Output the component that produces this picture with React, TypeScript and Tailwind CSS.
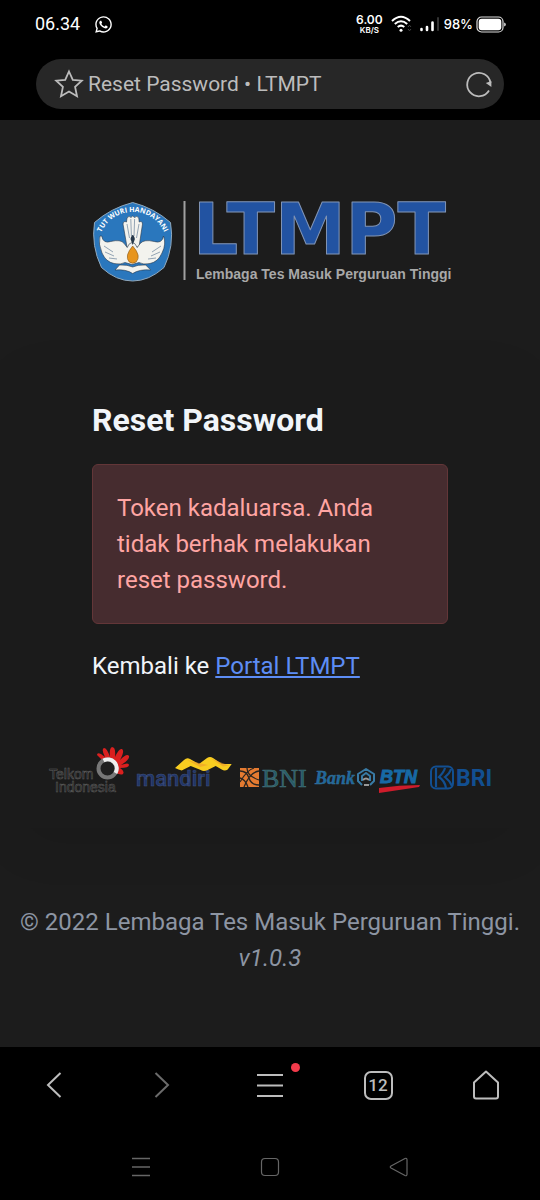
import { FaWhatsapp } from "react-icons/fa";

function StatusBar() {
  return (
    <div className="flex h-12 items-center justify-between pl-[35px] pr-[34px] text-white">
      <div className="flex items-center gap-3.5">
        <span className="text-lg leading-6">06.34</span>
        <FaWhatsapp size={19} aria-label="WhatsApp" />
      </div>
      <div className="flex items-center">
        <div className="flex flex-col items-center font-[Inter] font-semibold">
          <span className="text-[12px] leading-3">6.00</span>
          <span className="text-[8px] leading-2">KB/S</span>
        </div>
        <svg className="ml-2" width="22" height="18" viewBox="0 0 22 18" fill="none" stroke="#fff" strokeWidth="2" aria-hidden="true">
          <path d="M1 6Q10 -2.500 19 6M3.800 9Q10 3.500 16.200 9M6.700 12Q10 9.200 13.300 12" />
          <circle cx="10" cy="15.200" r="1.500" fill="#fff" stroke="none" />
          <path d="M17 12l1.500-1.800 1.500 1.800M17 14l1.500 1.800 1.500-1.800" stroke="#444" strokeWidth="1" />
        </svg>
        <svg className="ml-1.5" width="21" height="18" viewBox="0 0 21 18" strokeWidth="2.600" strokeLinecap="round" aria-hidden="true">
          <path d="M2.500 14v1M8 12v3M13.500 7.500v7.500" stroke="#fff" />
          <path d="M19 3v12" stroke="#333" strokeWidth="2" />
        </svg>
        <span className="ml-1 font-[Inter] text-[13px] font-medium leading-5">98%</span>
        <svg className="ml-[3px]" width="30" height="17" viewBox="0 0 30 17" aria-hidden="true">
          <rect x="1" y="1" width="26" height="15" rx="4.500" fill="none" stroke="#ddd" strokeWidth="1.200" />
          <rect x="2.700" y="2.700" width="22.600" height="11.600" rx="3" fill="#fff" />
          <path d="M28 6.500q2 .3 2 2t-2 2z" fill="#bbb" />
        </svg>
      </div>
    </div>
  );
}

function AddressBar() {
  return (
    <div className="px-9 py-[11px]">
      <div className="flex h-[50px] items-center rounded-full bg-[#272727] pl-[18px] pr-[11px] text-[#bcbcbc]">
        <button type="button" aria-label="Bookmark" className="shrink-0">
          <svg width="30" height="30" viewBox="0 0 30 30" fill="none" stroke="currentColor" strokeWidth="1.800">
            <path d="M15 2.500l3.800 8.300 9 .9-6.700 6.200 1.900 9.300L15 22.500l-8 4.700 1.900-9.300-6.700-6.200 9-.9z" />
          </svg>
        </button>
        <span className="ml-1 flex-1 text-[21px] leading-7">Reset Password • LTMPT</span>
        <button type="button" aria-label="Reload" className="shrink-0">
          <svg width="28" height="28" viewBox="0 0 28 28" fill="none" stroke="currentColor" strokeWidth="1.800">
            <path d="M24 20.500A11.700 11.700 0 1 1 25.500 13" />
            <path d="M20.800 13l5.600 4V11z" fill="currentColor" stroke="none" />
          </svg>
        </button>
      </div>
    </div>
  );
}

function LtmptLogo() {
  return (
    <svg className="w-full overflow-visible" viewBox="0 0 356 88" role="img" aria-label="LTMPT - Lembaga Tes Masuk Perguruan Tinggi">
      <defs>
        <path id="motto" d="M8 35.500A34.500 34.500 0 0 1 73.500 35.500" />
      </defs>
      <path d="M40.700 2.500Q62 8 78.500 22.500Q82.500 46 72 67.500Q57 81 40.700 81Q24 81 9.500 67.500Q-1 46 2.500 22.500Q19 8 40.700 2.500z" fill="#2a77bd" stroke="#90a9be" strokeWidth="1" />
      <text fill="#fff" fontSize="7" fontWeight="700" fontFamily="Open Sans, sans-serif">
        <textPath href="#motto" startOffset="50%" textAnchor="middle">TUT WURI HANDAYANI</textPath>
      </text>
      <g fill="#f3f3ee" stroke="#26384a" strokeWidth=".6" strokeLinejoin="round">
        <path d="M35 47L31 24q.5-3.500 3.500-2l.5-4q2-3 4-.5 1.700-3 3.500 0 2.500-2.500 4.300.5l.4 4q3-1.500 3.300 2L47 47z" />
        <path d="M9.700 36q1.500 8 9 5.500 10-2.500 13.500 2l3 4q2-5 5-5t5 5l3-4q4-4.500 14-2 8 2.500 9.300-5.500 3 8-1.500 17-4 9-12 10.500-7 1.500-11-1l-7 2-7-2q-4 2.500-11 1-8-1.500-12-10.500-4-9-2-17z" />
        <path d="M23 70l4.500-5q8-.5 13.200 2 5-2.500 13-2l5 5q-11-1-18 3.500Q34 69 23 70z" />
      </g>
      <path d="M35 24l2.500 14M38.800 19l.6 17M42.600 19l-.6 17M47 24l-2.500 14M12 46l9 6M13 52l9 4M17 58l8 1M69 46l-9 6M68 52l-9 4M64 58l-8 1" fill="none" stroke="#68819a" strokeWidth=".7" />
      <path d="M40.700 46q9 10 3.500 16-3.500 2.500-7 0Q32 56 40.700 46z" fill="#e7951e" stroke="#744813" strokeWidth=".5" />
      <path d="M38.500 39q2.200-8 4.400 0l-2.200 6z" fill="#26384a" />
      <path d="M92.500 1v79" stroke="#a0a0a0" strokeWidth="2" />
      <text x="101" y="54" fill="#2253a2" stroke="#8094b5" strokeWidth="1" strokeLinejoin="round" fontFamily="DejaVu Sans, sans-serif" fontWeight="700" fontSize="71">LTMPT</text>
      <text x="104" y="79" fill="#a8a8a8" fontFamily="Liberation Sans, sans-serif" fontWeight="700" fontSize="14">Lembaga Tes Masuk Perguruan Tinggi</text>
    </svg>
  );
}

function Sponsors() {
  return (
    <svg className="w-full" viewBox="0 0 444 60" role="img" aria-label="Telkom Indonesia, mandiri, BNI, Bank BTN, BRI">
      <g fontFamily="Liberation Sans, sans-serif" fontSize="14" fill="#1b1b1b" stroke="#606060" strokeWidth=".5">
        <text x="1" y="39">Telkom</text>
        <text x="7" y="52">Indonesia</text>
      </g>
      <path d="M57 25Q53 18 49 15q0-3 4-1l4 3Q53 9 56 8q3 0 6 9-1-9 2-10 4 0 3 10 4-9 7-8 3 2-2 11 7-7 9-4 1 3-8 9 8-3 8 0 0 3-9 3 5 3 3 6-3 2-9-3z" fill="#da201f" />
      <circle cx="59.500" cy="28.500" r="9" fill="#202020" stroke="#777" strokeWidth="4" />
      <path d="M55.500 20.500A9 9 0 0 1 67.500 33" fill="none" stroke="#eee" strokeWidth="4" />
      <text x="88" y="46" fontFamily="Roboto, sans-serif" fontWeight="500" fontSize="22" fill="#203568" stroke="#41527e" strokeWidth=".5">mandiri</text>
      <path d="M127 28l9-8q3-3 6-1l9 5 8-6q3-2 6 0l9 6 9.700 0-4 5.500q-3 2-6 0l-6-3.500-8 4q-4 2-7 0l-10-4-9 4.500q-3-1-6.700-2.500z" fill="#f8cd20" />
      <path d="M139 20l13 7 8-2-9-2zM163 18.500l12 8 6-1-8-3z" fill="#ec9b2d" opacity=".6" />
      <rect x="192" y="28" width="19" height="19" fill="#e57b31" />
      <path d="M192 31q7 0 9 7t10 7M199 28q0 8 12 12M192 38q5 1 8 9M211 31q-9 1-15 16M206 28q-7 2-14 14" fill="none" stroke="#292521" strokeWidth="1.300" />
      <text x="214" y="47" fontFamily="Liberation Serif, serif" fontSize="26" fill="#255b66" stroke="#456f77" strokeWidth=".6">BNI</text>
      <text x="267" y="44" fontFamily="Liberation Serif, serif" fontStyle="italic" fontWeight="700" fontSize="18" fill="#1d679e" stroke="#3a7194" strokeWidth=".4">Bank</text>
      <g fill="none" stroke="#397ba5" strokeWidth="2" strokeLinejoin="round">
        <path d="M314 45l-4-4V34l8-5 8 5v7l-4 4M314 41v-5l4-3 4 3v5" />
        <path d="M315 40q3-3 6 0M316 45h5" stroke="#999" />
      </g>
      <text x="332" y="43" fontFamily="Liberation Sans, sans-serif" fontStyle="italic" fontWeight="700" fontSize="18" fill="#1769a5" stroke="#1769a5" strokeWidth="1">BTN</text>
      <path d="M331 48q20-3 41-3l-1 2q-20 3-40 6z" fill="#cf1c2b" />
      <rect x="383" y="26.500" width="22" height="22" rx="5" fill="none" stroke="#124f91" strokeWidth="2" />
      <path d="M388 28v19M397 28q-1 4-6 9 6 4 7 11M403 29q-1 4-6 8 5 4 7 9" fill="none" stroke="#124f91" strokeWidth="2.200" />
      <text x="408" y="46" fontFamily="Roboto, sans-serif" fontWeight="700" fontSize="23" fill="#124f91">BRI</text>
    </svg>
  );
}

function BrowserNav() {
  const button = "relative flex items-center justify-center";
  return (
    <nav aria-label="Browser" className="grid h-[76px] grid-cols-5 text-[#bdbdbd]">
      <button type="button" aria-label="Back" className={button}>
        <svg width="32" height="32" viewBox="0 0 32 32" fill="none" stroke="currentColor" strokeWidth="2"><path d="M22.500 4L10 16l12.500 12" /></svg>
      </button>
      <button type="button" aria-label="Forward" className={button}>
        <svg width="32" height="32" viewBox="0 0 32 32" fill="none" stroke="#6b6b6b" strokeWidth="2"><path d="M9.500 4L22 16 9.500 28" /></svg>
      </button>
      <button type="button" aria-label="Menu" className={button}>
        <span className="relative">
          <svg width="32" height="32" viewBox="0 0 32 32" stroke="currentColor" strokeWidth="2.200"><path d="M3 6h26M3 16.500h26M3 27h26" /></svg>
          <span className="absolute -right-[14px] -top-[6px] size-[9px] rounded-full bg-[#f23b4b]" />
        </span>
      </button>
      <button type="button" aria-label="12 tabs" className={button}>
        <span className="flex size-[29px] items-center justify-center rounded-[7px] border-2 border-[#bdbdbd] text-[17px] font-medium leading-5">12</span>
      </button>
      <button type="button" aria-label="Home" className={button}>
        <svg width="32" height="32" viewBox="0 0 32 32" fill="none" stroke="currentColor" strokeWidth="2" strokeLinejoin="round"><path d="M16 2.500L28 13.500V27.500q0 2-2 2H6q-2 0-2-2V13.500z" /></svg>
      </button>
    </nav>
  );
}

function SystemNav() {
  const button = "flex items-center justify-center";
  return (
    <nav aria-label="System" className="mt-[11px] grid h-[66px] grid-cols-3 px-19 text-[#666]">
      <button type="button" aria-label="Recent apps" className={button}>
        <svg width="22" height="22" viewBox="0 0 22 22" stroke="currentColor" strokeWidth="1.500"><path d="M2 2.500h18M2 11h18M2 19.500h18" /></svg>
      </button>
      <button type="button" aria-label="Home screen" className={button}>
        <svg width="22" height="22" viewBox="0 0 22 22" fill="none" stroke="currentColor" strokeWidth="1.200"><rect x="2.500" y="2.500" width="17" height="17" rx="3.500" /></svg>
      </button>
      <button type="button" aria-label="System back" className={button}>
        <svg width="22" height="22" viewBox="0 0 22 22" fill="none" stroke="currentColor" strokeWidth="1.200" strokeLinejoin="round"><path d="M3 10L17 2.500q2-.8 2 1.200v14.600q0 2-2 1.200L3 12q-1.500-1 0-2z" /></svg>
      </button>
    </nav>
  );
}

export default function App() {
  return (
    <div className="flex min-h-screen flex-col bg-black font-[Roboto,sans-serif]">
      <header>
        <StatusBar />
        <AddressBar />
      </header>
      <main className="flex-1 bg-[#1c1c1c] px-5 text-2xl leading-9 text-[#f1f5f9]">
        <div className="px-[72px] pt-20">
          <LtmptLogo />
        </div>
        <section className="mt-[77px] bg-[#1b1b1b] pb-7 shadow-[0_16px_48px_rgba(0,0,0,0.08)]">
          <div className="px-[72px] pt-[35px]">
            <h1 className="text-[32px] font-bold leading-10">Reset Password</h1>
            <div role="alert" className="mt-6 rounded-md border border-[#633638] bg-[#462c2f] px-6 py-[25px] text-[#ffa5a3]">
              Token kadaluarsa. Anda tidak berhak melakukan reset password.
            </div>
            <p className="mt-6">
              Kembali ke <a href="#portal" className="text-[#5d8df5] underline">Portal LTMPT</a>
            </p>
          </div>
          <div className="mt-14 px-7">
            <Sponsors />
          </div>
        </section>
        <footer className="mt-[76px] whitespace-nowrap text-center text-[#8d95a3]">
          <p>© 2022 Lembaga Tes Masuk Perguruan Tinggi.</p>
          <p className="italic">v1.0.3</p>
        </footer>
      </main>
      <footer>
        <BrowserNav />
        <SystemNav />
      </footer>
    </div>
  );
}
